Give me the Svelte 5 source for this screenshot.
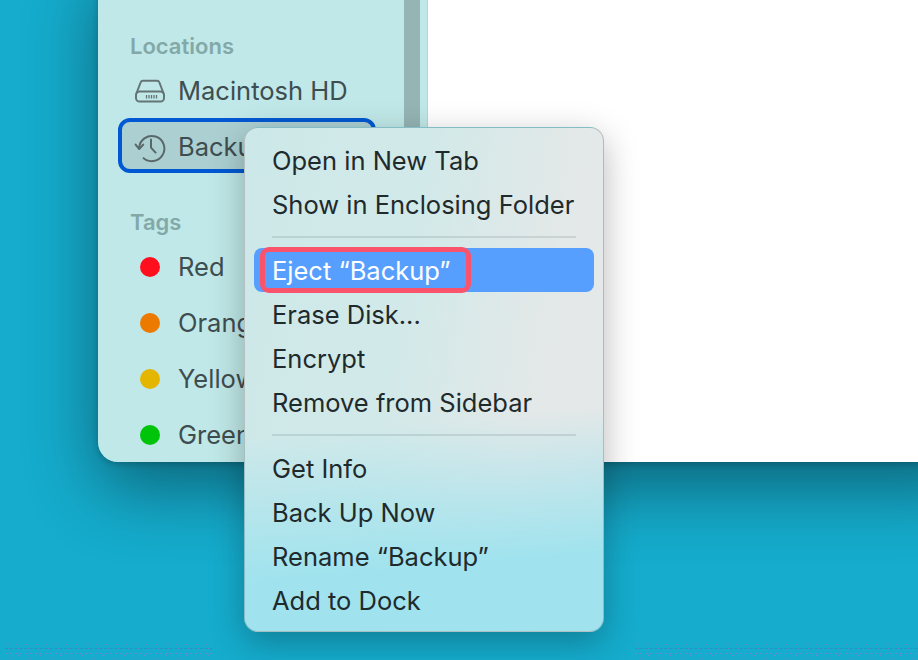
<script>
  const locations = [{ name: 'Macintosh HD', icon: 'hd' }, { name: 'Backup', icon: 'clock', selected: true }];
  const tags = [
    { name: 'Red', color: '#ff0f1e' },
    { name: 'Orange', color: '#ec7a00' },
    { name: 'Yellow', color: '#e5b600' },
    { name: 'Green', color: '#00c40a' }
  ];
  const groups = [
    [{ label: 'Open in New Tab' }, { label: 'Show in Enclosing Folder' }],
    [{ label: 'Eject “Backup”', active: true }, { label: 'Erase Disk...' }, { label: 'Encrypt' }, { label: 'Remove from Sidebar' }],
    [{ label: 'Get Info' }, { label: 'Back Up Now' }, { label: 'Rename “Backup”' }, { label: 'Add to Dock' }]
  ];
  const strips = [
    { side: 'left', w: 209 },
    { side: 'right', w: 283 }
  ];
</script>

<div class="desktop">
  {#each strips as s}
    <svg class="dither {s.side}" width={s.w} height="17" shape-rendering="crispEdges">
      <defs>
        <pattern id="a-{s.side}" width="5" height="17" patternUnits="userSpaceOnUse">
          <rect x="1" y="1" width="1" height="1" fill="#6a86d6" />
          <rect x="3" y="5" width="1" height="1" fill="#6a86d6" />
          <rect x="0" y="10" width="2" height="1" fill="#6a86d6" />
        </pattern>
        <pattern id="b-{s.side}" width="21" height="17" patternUnits="userSpaceOnUse">
          <rect x="4" y="15" width="2" height="1" fill="#6a86d6" />
          <rect x="13" y="12" width="2" height="1" fill="#6a86d6" />
        </pattern>
      </defs>
      <rect x="0" y="5" width={s.w} height="1" fill="#1a9cc2" />
      <rect x="0" y="0" width={s.w} height="17" fill="url(#a-{s.side})" />
      <rect x="0" y="0" width={s.w} height="17" fill="url(#b-{s.side})" />
    </svg>
  {/each}

  <section class="window">
    <aside class="sidebar">
      <div class="scrollbar"></div>
      <h2>Locations</h2>
      {#each locations as item}
        <div class="row" class:selected={item.selected}>
          <span class="glyph">
            {#if item.icon === 'hd'}
              <svg width="32" height="26" viewBox="0 0 32 26" fill="none" stroke="#647475" stroke-width="2">
                <path d="M6.6 4.5 C7 3.4 7.8 2.8 9 2.8 H23 C24.2 2.8 25 3.4 25.4 4.5 L29.6 15.5 M6.6 4.5 L2.4 15.5" />
                <rect x="2" y="13.5" width="28" height="10" rx="3.6" />
                <path d="M12.5 17 v3.6 M15 17 v3.6 M17.5 17 v3.6 M20 17 v3.6 M22.5 17 v3.6" stroke-width="1.3" />
              </svg>
            {:else}
              <svg width="32" height="32" viewBox="0 0 32 32" fill="none" stroke="#586869" stroke-width="2">
                <path d="M5.2 16.5 A12.6 12.6 0 1 1 9 26.6" />
                <path d="M1.6 13.6 L5.2 18 L9.2 13.6" stroke-linejoin="round" stroke-linecap="round" />
                <path d="M17 8.5 V16.6 L21.6 21.6" stroke-linecap="round" stroke-linejoin="round" />
              </svg>
            {/if}
          </span>
          <span class="name">{item.name}</span>
        </div>
      {/each}

      <h2 class="tags">Tags</h2>
      {#each tags as tag}
        <div class="row">
          <span class="glyph"><span class="dot" style="background: {tag.color}"></span></span>
          <span class="name">{tag.name}</span>
        </div>
      {/each}
    </aside>
    <div class="content"></div>
  </section>

  <nav class="menu">
    {#each groups as group, g}
      {#if g > 0}<div class="separator"></div>{/if}
      {#each group as item}
        <div class="item" class:active={item.active}>
          {item.label}
          {#if item.active}<span class="callout"></span>{/if}
        </div>
      {/each}
    {/each}
  </nav>
</div>

<style>
  :global(body) {
    margin: 0;
    background: #15accd;
  }

  .desktop {
    position: relative;
    width: 918px;
    height: 660px;
    overflow: hidden;
    background: #15accd;
    font-family: Inter, "Liberation Sans", sans-serif;
    font-size: 25.5px;
  }

  .dither {
    position: absolute;
    top: 643px;
    display: block;
  }

  .dither.left {
    left: 5px;
  }

  .dither.right {
    left: 635px;
  }

  .window {
    position: absolute;
    left: 98px;
    right: -60px;
    top: -40px;
    height: 502px;
    display: flex;
    border-radius: 0 0 20px 20px;
    box-shadow: 0 26px 70px rgba(0, 0, 0, 0.42), 0 2px 6px rgba(0, 0, 0, 0.2);
  }

  .sidebar {
    position: relative;
    flex: none;
    box-sizing: border-box;
    width: 330px;
    height: 100%;
    padding-top: 69px;
    overflow: hidden;
    background: #c0e8e8;
    border-radius: 0 0 0 20px;
    border-right: 1px solid #b2d6d6;
  }

  .scrollbar {
    position: absolute;
    left: 306px;
    top: 0;
    bottom: 0;
    width: 16px;
    background: #95b4b4;
  }

  h2 {
    height: 34px;
    margin: 0;
    padding-left: 32px;
    color: #83a8a8;
    font-size: 22px;
    font-weight: 600;
    line-height: 34px;
  }

  h2.tags {
    margin-top: 30px;
  }

  .row {
    display: flex;
    align-items: center;
    height: 56px;
    box-sizing: border-box;
    margin-left: 20px;
    width: 258px;
    color: #3e4d4f;
    position: relative;
  }

  .row.selected::before {
    content: "";
    position: absolute;
    inset: -1px 0 2px 0;
    border: 4px solid #0058d2;
    border-radius: 12px;
    background: #acd0d2;
  }

  .glyph {
    position: relative;
    display: flex;
    flex: none;
    align-items: center;
    justify-content: center;
    width: 58px;
    margin-left: 3px;
  }

  .dot {
    width: 20px;
    height: 20px;
    border-radius: 50%;
  }

  .name {
    position: relative;
    margin: -2px 0 0 -1px;
    white-space: nowrap;
  }

  .content {
    flex: 1;
    background: #fff;
    border-radius: 0 0 20px 0;
  }

  .menu {
    position: absolute;
    left: 244px;
    top: 127px;
    box-sizing: border-box;
    width: 360px;
    height: 505px;
    padding: 11px 9px 0;
    border: 1px solid rgba(60, 90, 95, 0.28);
    border-radius: 14px;
    color: #1f2a2c;
    background:
      linear-gradient(175deg, rgba(160, 227, 238, 0) 58%, rgba(160, 227, 238, 0.55) 72%, #a0e3ee 85%),
      linear-gradient(100deg, #cde8e9 0%, #d2e9e9 42%, #e3e8e8 75%, #e4e8e8 100%);
    box-shadow: 0 10px 34px rgba(0, 0, 0, 0.28);
  }

  .item {
    position: relative;
    height: 44px;
    padding-left: 18px;
    border-radius: 8px;
    line-height: 44px;
    white-space: nowrap;
  }

  .item.active {
    top: -1px;
    color: #fff;
    background: #579fff;
    line-height: 46px;
  }

  .callout {
    position: absolute;
    left: 6px;
    top: -1px;
    box-sizing: border-box;
    width: 211px;
    height: 46px;
    border: 5px solid #f9546c;
    border-radius: 9px;
  }

  .separator {
    height: 2px;
    margin: 9px 18px 11px;
    background: rgba(60, 80, 85, 0.14);
  }
</style>
